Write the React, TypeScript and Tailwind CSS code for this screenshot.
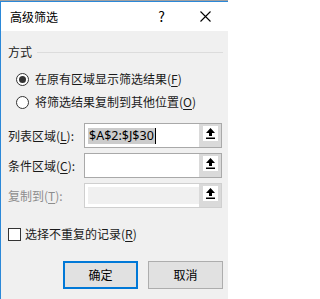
import React from 'react';

const font = { fontFamily: '"Noto Sans CJK SC", "Microsoft YaHei", sans-serif' };

const Key = ({ k }: { k: string }) => (
  <span>
    (<span className="underline underline-offset-2">{k}</span>)
  </span>
);

const PickIcon = () => (
  <svg width="9" height="11" viewBox="0 0 9 11">
    <path d="M4.5 0 L9 5 L6 5 L6 8 L3 8 L3 5 L0 5 Z" fill="#000" />
    <rect x="0" y="9.5" width="9" height="1.5" fill="#000" />
  </svg>
);

const RangeRow = ({
  label,
  k,
  value,
  disabled = false,
  className = '',
}: {
  label: string;
  k: string;
  value?: string;
  disabled?: boolean;
  className?: string;
}) => (
  <div className={`flex items-center ${className}`}>
    <div className={`w-[76px] text-[12px] ${disabled ? 'text-[#8d8d8d]' : 'text-[#1a1a1a]'}`}>
      {label}
      <Key k={k} />:
    </div>
    <div
      className={`flex h-[25px] w-[138px] border ${
        disabled ? 'border-[#cfcfcf]' : 'border-[#a9a9a9]'
      } bg-white`}
    >
      <div className="flex flex-1 items-center pl-[3px]">
        {disabled ? (
          <div className="h-[17px] w-full bg-[#f0f0f0]" />
        ) : value ? (
          <div className="flex items-center">
            <span
              className="bg-[#cccccc] px-px text-[12.5px] leading-[16px] text-black"
              style={{ fontFamily: '"Noto Sans", "Open Sans", sans-serif' }}
            >
              {value}
            </span>
            <span className="h-[16px] w-px bg-black" />
          </div>
        ) : null}
      </div>
      <div className="flex w-[22px] items-start justify-center bg-[#dadada] pt-[2px]">
        <div className="flex h-[15px] w-[15px] items-center justify-center bg-white">
          <PickIcon />
        </div>
      </div>
    </div>
  </div>
);

const Radio = ({ checked }: { checked?: boolean }) => (
  <div className="flex h-[13px] w-[13px] items-center justify-center rounded-full border border-[#333] bg-white">
    {checked && <div className="h-[7px] w-[7px] rounded-full bg-[#333]" />}
  </div>
);

export default function App() {
  return (
    <div className="h-[299px] w-[228px] overflow-hidden bg-[#a0a0a0] pt-px" style={font}>
      <div className="flex h-[298px] flex-col border-l border-t border-[#2b88d8] bg-[#f0f0f0]">
        <div className="flex h-[29px] items-center bg-white pl-[9px] pr-[17px] text-[12px] text-black">
          <span className="flex-1">高级筛选</span>
          <span className="mr-[35px] text-[14px]">?</span>
          <svg width="11" height="11" viewBox="0 0 11 11">
            <path d="M0.5 0.5 L10.5 10.5 M10.5 0.5 L0.5 10.5" stroke="#000" strokeWidth="1.1" />
          </svg>
        </div>

        <div className="flex flex-col pl-[7px] text-[12px] text-[#1a1a1a]">
          <div className="mt-[13px] flex h-4 items-center">
            <span>方式</span>
            <div className="ml-[5px] mr-[5px] h-px flex-1 bg-[#dcdcdc]" />
          </div>

          <div className="mt-[11px] flex h-4 items-center pl-[8px]">
            <Radio checked />
            <span className="ml-[6px]">
              在原有区域显示筛选结果<Key k="F" />
            </span>
          </div>
          <div className="mt-[7px] flex h-4 items-center pl-[8px]">
            <Radio />
            <span className="ml-[6px]">
              将筛选结果复制到其他位置<Key k="O" />
            </span>
          </div>

          <RangeRow className="mt-[13px]" label="列表区域" k="L" value="$A$2:$J$30" />
          <RangeRow className="mt-[5px]" label="条件区域" k="C" />
          <RangeRow className="mt-[5px]" label="复制到" k="T" disabled />

          <div className="mt-[18px] flex h-4 items-center">
            <div className="h-[13px] w-[13px] border border-[#333] bg-white" />
            <span className="ml-[4px]">
              选择不重复的记录<Key k="R" />
            </span>
          </div>

          <div className="mt-[19px] flex gap-[10px] pl-[55px]">
            <button className="h-[28px] w-[75px] border-2 border-[#0078d7] bg-[#e1e1e1] text-[12px] text-black">
              确定
            </button>
            <button className="h-[28px] w-[75px] border border-[#adadad] bg-[#e1e1e1] text-[12px] text-black">
              取消
            </button>
          </div>
        </div>
      </div>
    </div>
  );
}
